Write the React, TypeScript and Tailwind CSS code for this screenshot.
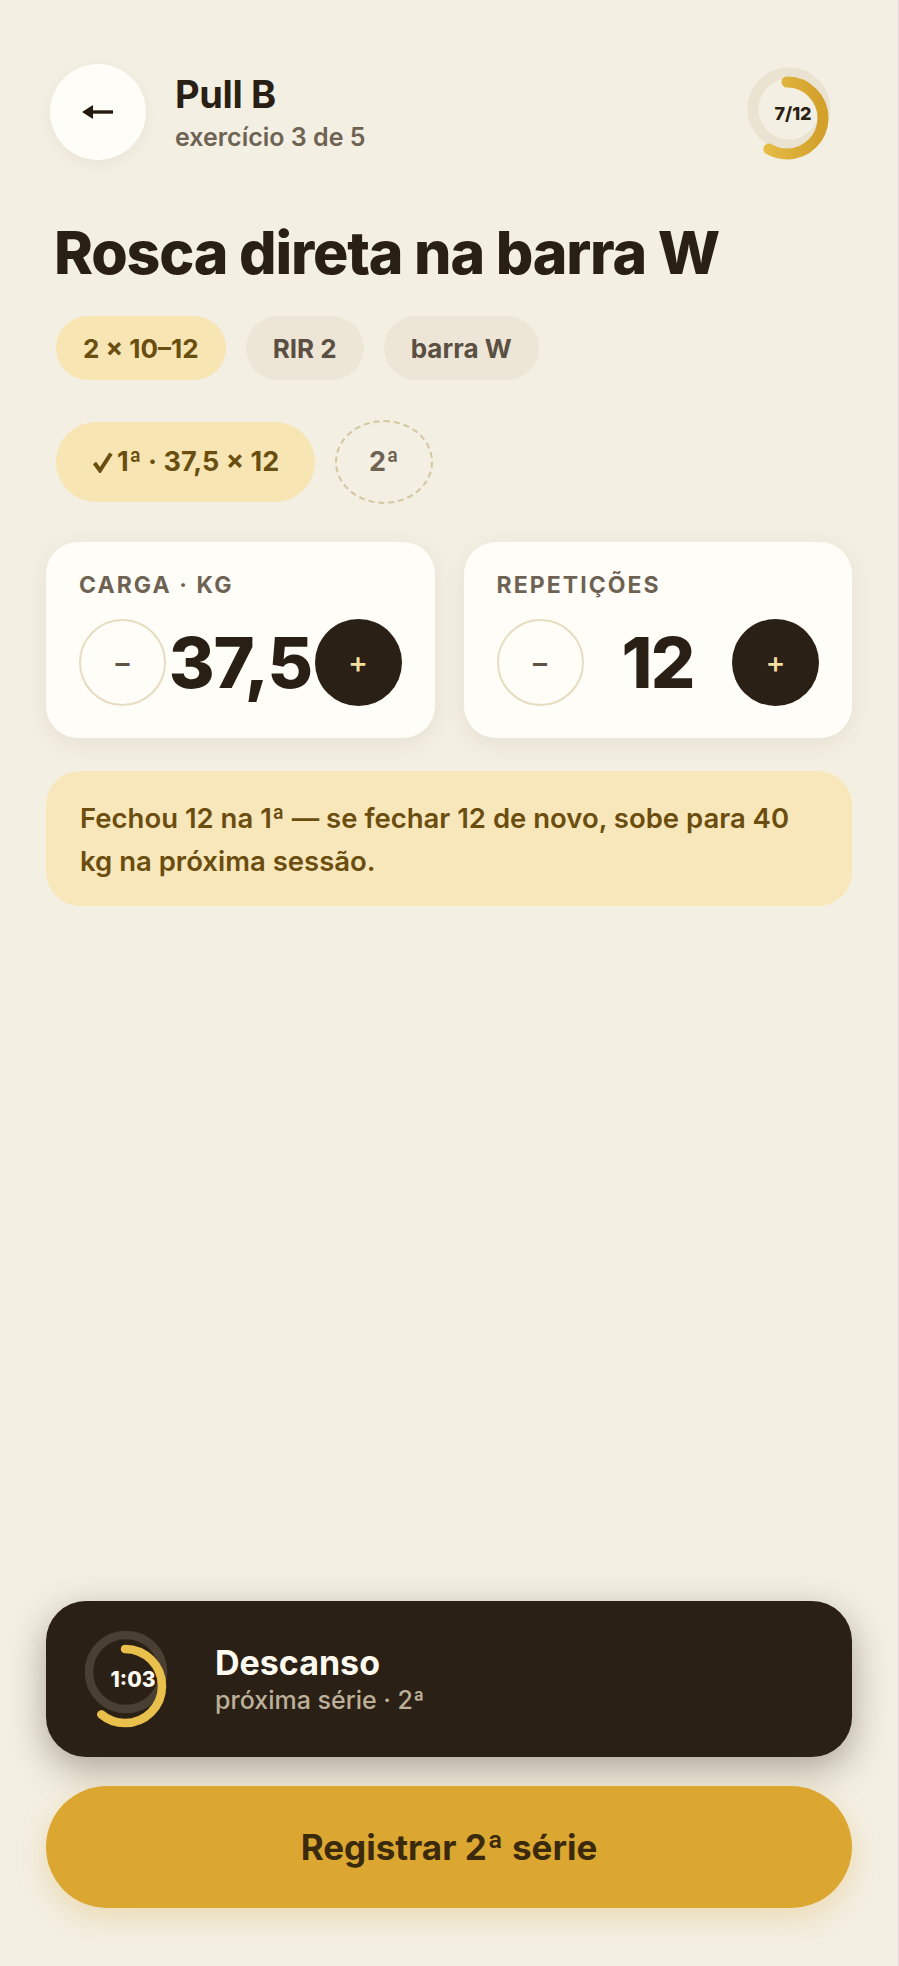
import React from 'react'

const font = "font-['Inter','Noto_Sans',sans-serif]"

function Ring({
  track,
  arc,
  frac,
  stroke,
  r,
  trackC,
  arcC,
  id,
  gradFrom,
  gradTo,
}: {
  track: string
  arc?: string
  frac: number
  stroke: number
  r: number
  trackC: [number, number]
  arcC: [number, number]
  id: string
  gradFrom: string
  gradTo: string
}) {
  const c = 2 * Math.PI * r
  return (
    <svg className="absolute inset-0" width="100%" height="100%">
      <defs>
        <linearGradient id={id} x1="0" y1="0" x2="0" y2="1">
          <stop offset="0" stopColor={gradFrom} />
          <stop offset="1" stopColor={gradTo} />
        </linearGradient>
      </defs>
      <circle cx={trackC[0]} cy={trackC[1]} r={r} fill="none" stroke={track} strokeWidth={stroke} />
      <circle
        cx={arcC[0]}
        cy={arcC[1]}
        r={r}
        fill="none"
        stroke={arc ?? `url(#${id})`}
        strokeWidth={stroke}
        strokeLinecap="round"
        strokeDasharray={`${c * frac} ${c}`}
        transform={`rotate(-90 ${arcC[0]} ${arcC[1]})`}
      />
    </svg>
  )
}

function Stepper({ label, value }: { label: string; value: string }) {
  return (
    <div className="flex-1 rounded-[32px] bg-[#fffdf8] pt-[30px] pb-[32px] px-[33px] shadow-[0_6px_22px_rgba(90,70,30,0.08)]">
      <div className="text-[23px] leading-[26px] font-bold tracking-[0.09em] text-[#6e6353]">{label}</div>
      <div className="mt-[21px] flex items-center">
        <button className="flex h-[87px] w-[87px] shrink-0 items-center justify-center rounded-full border-2 border-[#e6dcbf] text-[30px] font-medium text-[#5e5446]">
          −
        </button>
        <div className="flex-1 text-center text-[70px] leading-none font-extrabold tracking-[-0.02em] text-[#2a1f14]">
          {value}
        </div>
        <button className="flex h-[87px] w-[87px] shrink-0 items-center justify-center rounded-full bg-[#2b2016] text-[30px] font-medium text-[#f3dfa0]">
          +
        </button>
      </div>
    </div>
  )
}

export default function App() {
  return (
    <div className={`${font} flex min-h-[1966px] flex-col bg-[#f3efe3] px-[46px] pt-[60px] pb-[58px] border-r border-[#efd2e4]`}>
      {/* header */}
      <div className="flex items-center justify-between pl-[4px] pr-[13px]">
        <div className="flex items-center gap-[29px]">
          <button className="flex h-[96px] w-[96px] items-center justify-center rounded-full bg-[#fffdf8] shadow-[0_4px_14px_rgba(90,70,30,0.06)]">
            <svg width="32" height="16" viewBox="0 0 32 16">
              <rect x="8" y="6.3" width="23" height="3.4" fill="#241a10" />
              <path d="M0 8 L11 1 L11 15 Z" fill="#241a10" />
            </svg>
          </button>
          <div className="flex flex-col">
            <div className="text-[38px] leading-[44px] font-bold tracking-[-0.01em] text-[#2a1f14]">Pull B</div>
            <div className="mt-[6px] text-[25px] leading-[30px] font-semibold text-[#6e6353]">exercício 3 de 5</div>
          </div>
        </div>
        <div className="relative h-[104px] w-[100px]">
          <Ring
            id="g1"
            track="#ebe3d1"
            frac={7 / 12}
            stroke={11}
            r={36}
            trackC={[50, 49]}
            arcC={[48, 58]}
            gradFrom="#e9c24d"
            gradTo="#d3a02a"
          />
          <div className="absolute left-[54px] top-[53px] -translate-x-1/2 -translate-y-1/2 text-[18px] font-extrabold text-[#2a1f14]">
            7/12
          </div>
        </div>
      </div>

      {/* title */}
      <h1 className="mt-[58px] px-[8px] text-[59px] leading-[62px] font-extrabold tracking-[-0.02em] text-[#2a1f14]">
        Rosca direta na barra W
      </h1>

      {/* tags */}
      <div className="mt-[32px] flex gap-[20px] px-[10px]">
        <span className="flex h-[64px] items-center rounded-full bg-[#f7e5b3] px-[27px] text-[26px] font-bold text-[#6a4e10]">
          2 × 10–12
        </span>
        <span className="flex h-[64px] items-center rounded-full bg-[#ede6d6] px-[27px] text-[26px] font-bold text-[#5a4f42]">
          RIR 2
        </span>
        <span className="flex h-[64px] items-center rounded-full bg-[#ede6d6] px-[27px] text-[26px] font-bold text-[#5a4f42]">
          barra W
        </span>
      </div>

      {/* sets */}
      <div className="mt-[40px] flex h-[84px] items-center gap-[20px] px-[10px]">
        <span className="flex h-[80px] items-center rounded-full bg-[#f7e5b3] px-[36px] text-[27px] font-bold text-[#6a4e10]">
          <svg width="21" height="22" viewBox="0 0 21 22" className="mr-[4px]">
            <path d="M2.5 12 L8 19.5 L19 2.5" fill="none" stroke="#6a4e10" strokeWidth="4" strokeLinejoin="miter" />
          </svg>
          1ª · 37,5 × 12
        </span>
        <span className="flex h-[84px] w-[98px] items-center justify-center rounded-[50%] border-2 border-dashed border-[#d3c79f] text-[27px] font-bold text-[#6e6353]">
          2ª
        </span>
      </div>

      {/* steppers */}
      <div className="mt-[38px] flex gap-[29px]">
        <Stepper label="CARGA · KG" value="37,5" />
        <Stepper label="REPETIÇÕES" value="12" />
      </div>

      {/* hint */}
      <div className="mt-[33px] rounded-[34px] bg-[#f7e7bb] pl-[34px] pr-[42px] pt-[26px] pb-[23px] text-[27.5px] leading-[43px] font-semibold text-[#6b4d0f]">
        Fechou 12 na 1ª — se fechar 12 de novo, sobe para 40 kg na próxima sessão.
      </div>

      <div className="flex-1" />

      {/* rest */}
      <div className="flex h-[156px] items-center gap-[35px] rounded-[40px] bg-[#2b2016] pl-[34px] shadow-[0_12px_36px_rgba(40,28,12,0.35)]">
        <div className="relative h-[110px] w-[100px] shrink-0">
          <Ring
            id="g2"
            track="#4a3f33"
            arc="#eac04c"
            frac={0.61}
            stroke={8.5}
            r={37}
            trackC={[46, 48]}
            arcC={[45, 62]}
            gradFrom="#eac04c"
            gradTo="#eac04c"
          />
          <div className="absolute left-[53px] top-[56px] -translate-x-1/2 -translate-y-1/2 text-[21px] font-extrabold text-[#fffaf0]">
            1:03
          </div>
        </div>
        <div className="flex flex-col">
          <div className="text-[34px] leading-[40px] font-bold text-[#fffaf0]">Descanso</div>
          <div className="mt-[3px] text-[25px] leading-[29px] font-medium text-[#bdb098]">próxima série · 2ª</div>
        </div>
      </div>

      {/* cta */}
      <button className="mt-[29px] flex h-[122px] items-center justify-center rounded-full bg-[#dba731] text-[35px] font-bold text-[#3a2a0b] shadow-[0_10px_30px_rgba(219,167,49,0.28)]">
        Registrar 2ª série
      </button>
    </div>
  )
}
